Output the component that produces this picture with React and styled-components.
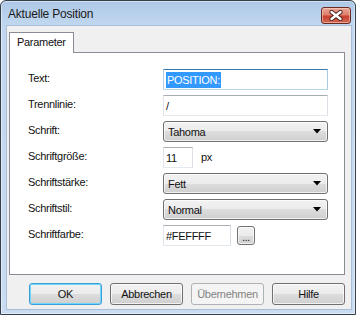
import React from "react";
import styled, { createGlobalStyle } from "styled-components";

const GlobalStyle = createGlobalStyle`
  html, body {
    margin: 0;
    padding: 0;
    background: #ffffff;
  }
  body {
    font-family: "Liberation Sans", Arial, sans-serif;
    font-size: 11px;
    letter-spacing: -0.3px;
    color: #111;
  }
`;

const App = () => {
  return (
    <>
      <GlobalStyle />
      <Window>
        <TitleBar>
          <Title>Aktuelle Position</Title>
          <CloseButton>
            <svg width="14" height="11" viewBox="0 0 14 11">
              <path d="M2.5 2 L11.5 9 M11.5 2 L2.5 9" stroke="#4a1f1a" strokeWidth="4.2" strokeLinecap="round" />
              <path d="M2.5 2 L11.5 9 M11.5 2 L2.5 9" stroke="#ffffff" strokeWidth="2.4" strokeLinecap="round" />
            </svg>
          </CloseButton>
        </TitleBar>
        <Client>
          <TabStrip>
            <Tab>Parameter</Tab>
          </TabStrip>
          <Panel>
            <Label>Text:</Label>
            <Field focused width={165}>
              <Selected>POSITION:</Selected>
            </Field>

            <Label>Trennlinie:</Label>
            <Field width={165}>/</Field>

            <Label>Schrift:</Label>
            <Combo>Tahoma</Combo>

            <Label>Schriftgröße:</Label>
            <Inline>
              <Field width={30}>11</Field>
              <Unit>px</Unit>
            </Inline>

            <Label>Schriftstärke:</Label>
            <Combo>Fett</Combo>

            <Label>Schriftstil:</Label>
            <Combo>Normal</Combo>

            <Label>Schriftfarbe:</Label>
            <Inline>
              <Field width={68}>#FEFFFF</Field>
              <SmallButton>...</SmallButton>
            </Inline>
          </Panel>
          <ButtonRow>
            <Button primary>OK</Button>
            <Button>Abbrechen</Button>
            <Button disabled>Übernehmen</Button>
            <Button>Hilfe</Button>
          </ButtonRow>
        </Client>
      </Window>
    </>
  );
};

const Combo = ({ children }) => (
  <ComboBox>
    <span>{children}</span>
    <svg width="8" height="5" viewBox="0 0 8 5">
      <path d="M0 0 H8 L4 4.5 Z" fill="#000" />
    </svg>
  </ComboBox>
);

export default App;

const Window = styled.div`
  width: 356px;
  height: 315px;
  box-sizing: border-box;
  border: 1px solid #36404c;
  border-radius: 6px 6px 0 0;
  background: linear-gradient(to bottom, #adc8e7 0px, #c1d7ef 24px, #c9dcf1 100%);
  box-shadow: inset 0 0 0 1px rgba(255, 255, 255, 0.45);
  display: flex;
  flex-direction: column;
  overflow: hidden;
`;

const TitleBar = styled.div`
  height: 24px;
  display: flex;
  align-items: center;
  justify-content: space-between;
  padding: 0 4px 0 7px;
`;

const Title = styled.div`
  font-size: 12px;
  letter-spacing: -0.2px;
  color: #1a1a1a;
  padding-top: 1px;
`;

const CloseButton = styled.div`
  width: 30px;
  height: 17px;
  box-sizing: border-box;
  margin-top: 4px;
  border: 1px solid #6a2a22;
  border-radius: 3px;
  background: linear-gradient(to bottom, #e9a898 0%, #dd7f6c 45%, #c8412f 55%, #d06a52 100%);
  box-shadow: inset 0 0 0 1px rgba(255, 220, 210, 0.5);
  display: flex;
  align-items: center;
  justify-content: center;
`;

const Client = styled.div`
  flex: 1;
  margin: 0 3px 4px 5px;
  background: #f0f0f0;
  border: 1px solid #a9bed6;
  display: flex;
  flex-direction: column;
  padding: 6px 6px 4px 2px;
`;

const TabStrip = styled.div`
  display: flex;
  height: 20px;
`;

const Tab = styled.div`
  background: #ffffff;
  border: 1px solid #898c95;
  border-bottom: none;
  padding: 0 7px;
  height: 21px;
  box-sizing: border-box;
  line-height: 19px;
  position: relative;
  z-index: 1;
`;

const Panel = styled.div`
  height: 223px;
  box-sizing: border-box;
  border: 1px solid #898c95;
  background: #ffffff;
  padding: 16px 16px 0 18px;
  display: grid;
  grid-template-columns: 135px 1fr;
  grid-auto-rows: 21px;
  row-gap: 5px;
  align-content: start;
`;

const Label = styled.div`
  display: flex;
  align-items: center;
  padding-bottom: 3px;
`;

const Field = styled.div`
  width: ${(p) => p.width}px;
  height: 21px;
  box-sizing: border-box;
  border: 1px solid;
  border-color: ${(p) =>
    p.focused ? "#3d7bad #a4c9e3 #b7d9ed #b5cfe7" : "#abadb3 #dbdfe6 #e3e9ef #e2e3ea"};
  background: #fff;
  display: flex;
  align-items: center;
  padding-left: 2px;
  white-space: nowrap;
`;

const Selected = styled.span`
  background: #3399ff;
  color: #fff;
  padding: 1px 1px;
  line-height: 14px;
`;

const ComboBox = styled.div`
  width: 165px;
  height: 21px;
  box-sizing: border-box;
  border: 1px solid #707070;
  border-radius: 3px;
  background: linear-gradient(to bottom, #f2f2f2 0%, #ebebeb 50%, #dddddd 50%, #cfcfcf 100%);
  box-shadow: inset 0 0 0 1px rgba(255, 255, 255, 0.7);
  display: flex;
  align-items: center;
  justify-content: space-between;
  padding: 0 6px 0 4px;

  svg {
    display: block;
  }
`;

const Inline = styled.div`
  display: flex;
  align-items: center;
`;

const Unit = styled.span`
  margin-left: 8px;
  padding-bottom: 2px;
`;

const SmallButton = styled.div`
  width: 18px;
  height: 19px;
  box-sizing: border-box;
  margin-left: 6px;
  border: 1px solid #707070;
  border-radius: 3px;
  background: linear-gradient(to bottom, #f2f2f2 0%, #ebebeb 50%, #dddddd 50%, #cfcfcf 100%);
  box-shadow: inset 0 0 0 1px rgba(255, 255, 255, 0.7);
  display: flex;
  align-items: flex-end;
  justify-content: center;
  font-size: 10px;
  line-height: 13px;
`;

const ButtonRow = styled.div`
  display: flex;
  justify-content: flex-end;
  gap: 8px;
  margin-top: 8px;
`;

const Button = styled.div`
  width: 73px;
  height: 22px;
  box-sizing: border-box;
  border: 1px solid ${(p) => (p.primary ? "#3c9fd8" : p.disabled ? "#adb2b5" : "#707070")};
  border-radius: 3px;
  background: ${(p) =>
    p.disabled
      ? "#f4f4f4"
      : "linear-gradient(to bottom, #f2f2f2 0%, #ebebeb 50%, #dddddd 50%, #cfcfcf 100%)"};
  box-shadow: inset 0 0 0 1px
    ${(p) => (p.primary ? "#6fd6fb" : p.disabled ? "transparent" : "rgba(255,255,255,0.7)")};
  color: ${(p) => (p.disabled ? "#838383" : "#111")};
  display: flex;
  align-items: center;
  justify-content: center;
`;
